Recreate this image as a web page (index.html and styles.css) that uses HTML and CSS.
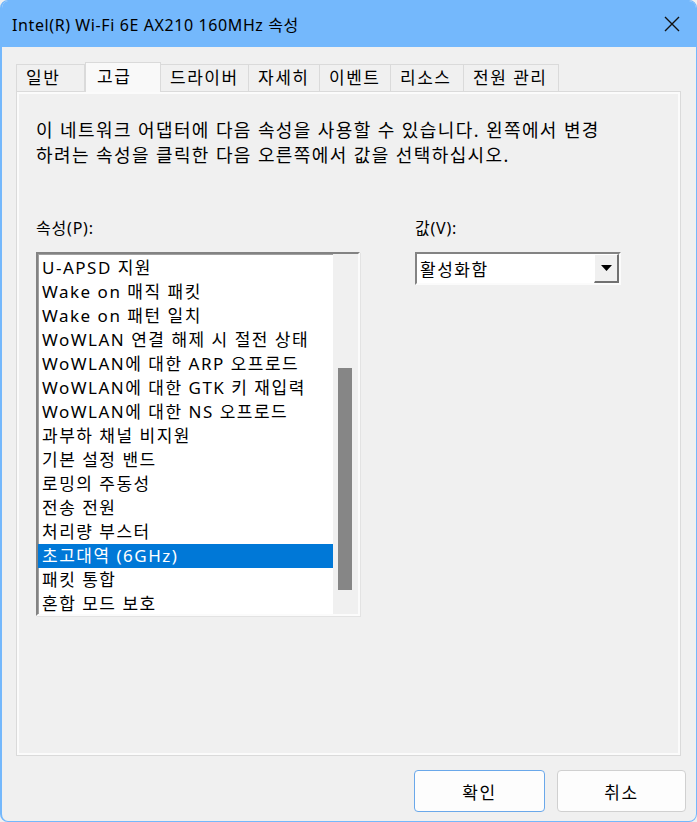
FILE: index.html
```html
<!DOCTYPE html>
<html>
<head>
    <title>Intel(R) Wi-Fi 6E AX210 160MHz 속성</title>
    <meta charset="utf-8">
    <link rel="stylesheet" href="styles.css">
</head>
<body>
    <div class="window">
        <div class="titlebar">
            <span class="title">Intel(R) Wi-Fi 6E AX210 160MHz 속성</span>
            <svg class="close" width="16" height="16" viewBox="0 0 16 16">
                <path d="M1 1 L15 15 M15 1 L1 15" stroke="#111" stroke-width="1.4" fill="none"/>
            </svg>
        </div>

        <div class="content">
            <div class="tabs">
                <div class="tab t1">일반</div>
                <div class="tab t2 active">고급</div>
                <div class="tab t3">드라이버</div>
                <div class="tab t4">자세히</div>
                <div class="tab t5">이벤트</div>
                <div class="tab t6">리소스</div>
                <div class="tab t7">전원 관리</div>
            </div>

            <div class="panel">
                <p class="desc">이 네트워크 어댑터에 다음 속성을 사용할 수 있습니다. 왼쪽에서 변경<br>하려는 속성을 클릭한 다음 오른쪽에서 값을 선택하십시오.</p>

                <div class="columns">
                    <div class="col-left">
                        <label class="field-label">속성(P):</label>
                        <div class="listbox">
                            <ul class="items">
                                <li>U-APSD 지원</li>
                                <li>Wake on 매직 패킷</li>
                                <li>Wake on 패턴 일치</li>
                                <li>WoWLAN 연결 해제 시 절전 상태</li>
                                <li>WoWLAN에 대한 ARP 오프로드</li>
                                <li>WoWLAN에 대한 GTK 키 재입력</li>
                                <li>WoWLAN에 대한 NS 오프로드</li>
                                <li>과부하 채널 비지원</li>
                                <li>기본 설정 밴드</li>
                                <li>로밍의 주동성</li>
                                <li>전송 전원</li>
                                <li>처리량 부스터</li>
                                <li class="selected">초고대역 (6GHz)</li>
                                <li>패킷 통합</li>
                                <li>혼합 모드 보호</li>
                            </ul>
                            <div class="scrollbar">
                                <div class="thumb"></div>
                            </div>
                        </div>
                    </div>

                    <div class="col-right">
                        <label class="field-label">값(V):</label>
                        <div class="combo">
                            <span class="combo-text">활성화함</span>
                            <div class="combo-btn">
                                <svg width="11" height="6" viewBox="0 0 11 6"><path d="M0 0 H11 L5.5 6 Z" fill="#000"/></svg>
                            </div>
                        </div>
                    </div>
                </div>
            </div>

            <div class="buttons">
                <button class="btn primary">확인</button>
                <button class="btn">취소</button>
            </div>
        </div>
    </div>
</body>
</html>
```

FILE: styles.css
```css
html, body { margin: 0; padding: 0; }
body { font-family: "Noto Sans", "Noto Sans CJK KR", sans-serif; width: 697px; height: 822px; overflow: hidden; background: #f0f0f0; color: #000; }

.window { box-sizing: border-box; width: 697px; height: 822px; border: 1px solid #74b8fc; border-left-width: 2px; border-radius: 8px; background: #f0f0f0; display: flex; flex-direction: column; overflow: hidden; }

.titlebar { height: 46px; background: #74b8fc; display: flex; align-items: center; justify-content: space-between; padding: 0 16px 0 10px; flex-shrink: 0; }
.title { font-size: 16px; letter-spacing: 0.6px; color: #000; }
.close { display: block; }

.content { flex: 1; display: flex; flex-direction: column; padding: 15px 10px 9px 14px; }

.tabs { display: flex; align-items: flex-end; height: 29px; position: relative; z-index: 1; }
.tab { box-sizing: border-box; height: 27px; border: 1px solid #dadada; border-bottom: none; border-left: none; font-size: 17px; letter-spacing: 1.5px; line-height: 26px; padding-left: 9px; background: #f0f0f0; white-space: nowrap; }
.tab.t1 { border-left: 1px solid #dadada; width: 69px; }
.tab.t2 { width: 76px; }
.tab.t3 { width: 88px; }
.tab.t4 { width: 71px; }
.tab.t5 { width: 71px; }
.tab.t6 { width: 73px; }
.tab.t7 { width: 95px; }
.tab.active { height: 30px; background: #f9f9f9; border: 1px solid #dadada; border-bottom: none; margin-bottom: -1px; line-height: 27px; padding-left: 11px; }

.panel { box-sizing: border-box; height: 665px; margin-right: 5px; border: 1px solid #dadada; box-shadow: inset 0 0 0 2px #fbfbfb; background: #f0f0f0; padding: 26px 19px 0 19px; }

.desc { margin: 0; font-size: 18px; letter-spacing: 1.4px; line-height: 25px; white-space: nowrap; }

.columns { display: flex; gap: 55px; margin-top: 50px; }
.field-label { display: block; font-size: 16px; letter-spacing: 0.8px; line-height: 20px; margin-bottom: 14px; }

.listbox { box-sizing: border-box; width: 324px; height: 364px; border-top: 2px solid #838383; border-left: 2px solid #838383; border-right: 2px solid #fbfbfb; border-bottom: 2px solid #fbfbfb; box-shadow: 1px 1px 0 #e3e3e3, inset 1px 1px 0 #a0a0a0; background: #fff; display: flex; }
.items { list-style: none; margin: 0; padding: 2px 0 0 0; flex: 1; }
.items li { font-size: 17px; letter-spacing: 1.5px; height: 24px; line-height: 24px; padding-left: 4px; white-space: nowrap; }
.items li.selected { background: #0078d7; color: #fff; }

.scrollbar { width: 25px; background: #f0f0f0; padding: 114px 0 0 5px; box-sizing: border-box; }
.thumb { width: 14px; height: 222px; background: #868686; }

.combo { box-sizing: border-box; width: 206px; height: 33px; border-top: 2px solid #838383; border-left: 2px solid #838383; border-right: 2px solid #fbfbfb; border-bottom: 2px solid #fbfbfb; background: #fff; display: flex; align-items: center; justify-content: space-between; }
.combo-text { font-size: 17px; letter-spacing: 1.5px; padding-left: 3px; }
.combo-btn { box-sizing: border-box; width: 25px; height: 29px; background: #f0f0f0; border-left: 1px solid #fff; border-top: 1px solid #fff; border-right: 2px solid #717171; border-bottom: 2px solid #717171; display: flex; align-items: center; justify-content: center; }
.combo-btn svg { display: block; }

.buttons { display: flex; justify-content: flex-end; gap: 12px; margin-top: auto; }
.btn { box-sizing: border-box; width: 129px; height: 42px; border: 1px solid #d0d0d0; border-radius: 4px; background: #fdfdfd; font-family: "Noto Sans", "Noto Sans CJK KR", sans-serif; font-size: 17px; letter-spacing: 1.5px; color: #000; }
.btn.primary { border-color: #6aa8ea; width: 131px; }
```
